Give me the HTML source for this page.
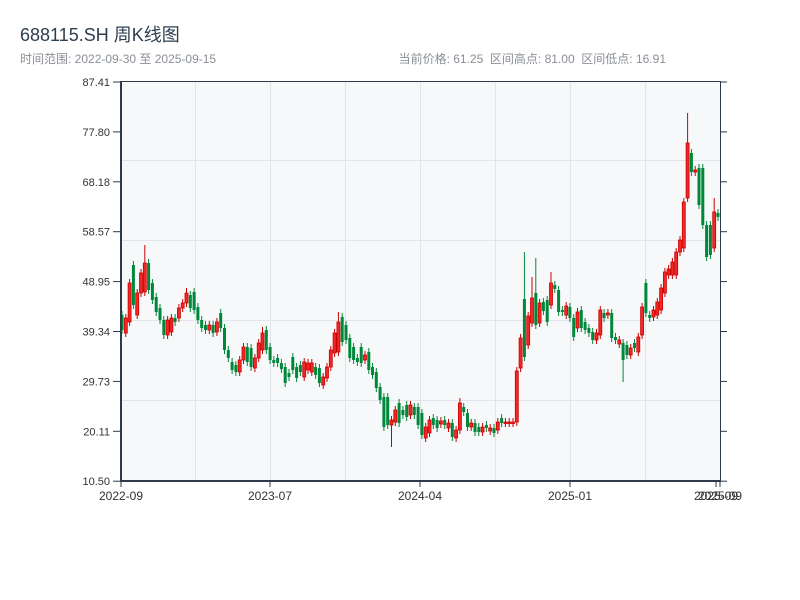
<!DOCTYPE html>
<html><head><meta charset="utf-8"><style>
html,body{margin:0;padding:0;background:#fff;width:800px;height:600px;overflow:hidden}
svg{display:block}
text{font-family:"Liberation Sans","Noto Sans CJK SC",sans-serif;white-space:pre}
</style></head><body>
<svg id="s" width="800" height="600" xmlns="http://www.w3.org/2000/svg" xml:space="preserve">
<text x="20" y="41" font-size="18" fill="#2c3e50">688115.SH 周K线图</text>
<text x="20" y="63" font-size="12" fill="#8a8f96">时间范围: 2022-09-30 至 2025-09-15</text>
<text x="666" y="63" font-size="12" fill="#8a8f96" text-anchor="end">当前价格: 61.25  区间高点: 81.00  区间低点: 16.91</text>
<rect x="121" y="81" width="599" height="400" fill="#f7f8fa"/>
<g stroke="#e1e4ea" stroke-width="1">
<line x1="195.5" y1="81" x2="195.5" y2="481"/><line x1="270.5" y1="81" x2="270.5" y2="481"/>
<line x1="345.5" y1="81" x2="345.5" y2="481"/><line x1="420.5" y1="81" x2="420.5" y2="481"/>
<line x1="495.5" y1="81" x2="495.5" y2="481"/><line x1="570.5" y1="81" x2="570.5" y2="481"/>
<line x1="645.5" y1="81" x2="645.5" y2="481"/>
<line x1="121" y1="160.5" x2="720" y2="160.5"/><line x1="121" y1="240.5" x2="720" y2="240.5"/>
<line x1="121" y1="320.5" x2="720" y2="320.5"/><line x1="121" y1="400.5" x2="720" y2="400.5"/>
</g>
<g id="c"></g>
<g stroke="#2c3a4a" fill="none">
<line x1="121" y1="81" x2="121" y2="482" stroke-width="2"/>
<line x1="120" y1="481" x2="721" y2="481" stroke-width="2"/>
<line x1="121" y1="81.5" x2="720" y2="81.5" stroke-width="1"/>
<line x1="720.5" y1="81" x2="720.5" y2="482" stroke-width="1"/>
</g>
<g id="ax" font-size="11" fill="#333"></g>
</svg>
<script>
var d=[[315,330,'g'],[318,333,'r'],[283,322,'r'],[265,305,'g'],[293,315,'r'],[273,293,'r'],[263,292,'r',245],[263,290,'g'],[283,300,'g'],[297,312,'g'],[308,320,'g'],[320,335,'g'],[320,335,'r'],[318,332,'r'],[318,322,'g'],[308,318,'r'],[303,308,'r'],[293,303,'r',288],[295,308,'g'],[292,310,'g'],[307,320,'g'],[320,328,'g'],[325,330,'g'],[325,330,'r'],[325,333,'g'],[322,332,'r'],[313,328,'g'],[328,350,'g'],[350,358,'g'],[362,370,'g'],[365,372,'g'],[360,372,'r'],[347,360,'r'],[347,362,'g'],[348,367,'g'],[358,368,'r'],[343,358,'r'],[333,350,'r',327],[330,350,'g'],[347,360,'g'],[360,363,'g'],[358,363,'g'],[363,369,'g'],[367,383,'g'],[373,377,'g'],[357,370,'g'],[367,378,'g'],[365,372,'g'],[362,377,'r'],
[363,370,'r'],[363,372,'r'],[367,375,'g'],[368,383,'g'],[377,385,'r'],[367,378,'r'],[350,367,'r'],[333,353,'r'],[322,352,'r',312],[317,342,'g'],[325,340,'g'],[338,358,'g'],[347,360,'g'],[358,362,'g'],[347,363,'g'],[355,360,'r'],[352,370,'g'],[367,375,'g'],[372,388,'g'],[387,400,'g'],[397,427,'g'],[397,425,'g'],[420,425,'r',0,447],[410,422,'r'],[403,423,'g'],[410,415,'g'],[405,417,'g'],[405,415,'r'],[407,415,'g'],[407,425,'g'],[413,435,'g'],[427,438,'r'],[420,433,'r'],[418,425,'g'],[420,428,'g'],[421,424,'r'],[420,425,'g'],[423,428,'r'],[423,437,'g'],[430,438,'r'],[403,430,'r',398],[407,412,'g'],[413,427,'g'],[423,427,'r'],[423,432,'g'],[427,432,'g'],[427,432,'r'],[425,428,'g'],[428,431,'r'],[428,433,'g'],[422,430,'r'],[418,423,'g'],[422,423,'r'],[422,423,'r'],[422,423,'r'],
[371,422,'r'],[338,368,'r'],[299,357,'g',252],[316,345,'r'],[298,323,'r',277],[293,325,'g',258],[303,323,'r'],[302,311,'g'],[300,322,'g'],[283,305,'r',272],[285,289,'g'],[290,312,'g'],[310,312,'g'],[306,315,'r'],[307,318,'g'],[318,337,'g'],[312,328,'r'],[310,328,'g'],[322,330,'g'],[328,333,'g'],[332,340,'g'],[333,340,'r'],[310,335,'r'],[313,318,'g'],[313,315,'r'],[313,338,'g'],[337,340,'g'],[340,344,'r'],[343,360,'g',0,382],[345,355,'g'],[348,355,'r'],[343,348,'g'],[337,352,'r'],[307,335,'r'],[283,313,'g'],[315,318,'g'],[310,317,'r'],[302,315,'r'],[288,310,'r'],[272,293,'r'],[269,275,'r'],[262,275,'r'],[252,275,'r'],[240,252,'r'],[202,248,'r'],[143,198,'r',113],[153,172,'g'],[170,172,'r'],[168,205,'g'],[168,225,'g'],[225,257,'g'],[225,255,'g'],[212,248,'r',198],[213,217,'g']];
var n=d.length,st=(718-122)/(n-1),h='';
for(var i=0;i<n;i++){var c=d[i],x=122+i*st,t=c[0],b=c[1],hi=c[3]||t-4,lo=c[4]||b+4;
var col=c[2]=='r'?'#cc0000':'#00883a';
h+='<line x1="'+x.toFixed(1)+'" y1="'+hi+'" x2="'+x.toFixed(1)+'" y2="'+lo+'" stroke="'+col+'" stroke-width="1"/>';
h+='<rect x="'+(x-1.5).toFixed(1)+'" y="'+t+'" width="3" height="'+Math.max(b-t,1.5)+'" fill="'+(c[2]=='r'?'#f02828':'#00883a')+'" stroke="'+col+'" stroke-width="'+(c[2]=='r'?0.8:0)+'"/>';}
document.getElementById('c').innerHTML=h;
var yl=['87.41','77.80','68.18','58.57','48.95','39.34','29.73','20.11','10.50'],a='';
for(var j=0;j<9;j++){var y=82+j*49.9;a+='<text x="110" y="'+(y+4)+'" text-anchor="end">'+yl[j]+'</text>';
a+='<line x1="113" y1="'+y+'" x2="121" y2="'+y+'" stroke="#2c3a4a"/><line x1="720" y1="'+y+'" x2="727" y2="'+y+'" stroke="#2c3a4a"/>';}
var xl=[[121,'2022-09'],[270,'2023-07'],[420,'2024-04'],[570,'2025-01'],[716,'2025-09'],[720,'2025-09']];
for(var k=0;k<xl.length;k++){a+='<text x="'+xl[k][0]+'" y="500" text-anchor="middle" font-size="12">'+xl[k][1]+'</text><line x1="'+xl[k][0]+'" y1="481" x2="'+xl[k][0]+'" y2="487" stroke="#2c3a4a"/>';}
document.getElementById('ax').innerHTML=a;
</script>
</body></html>
